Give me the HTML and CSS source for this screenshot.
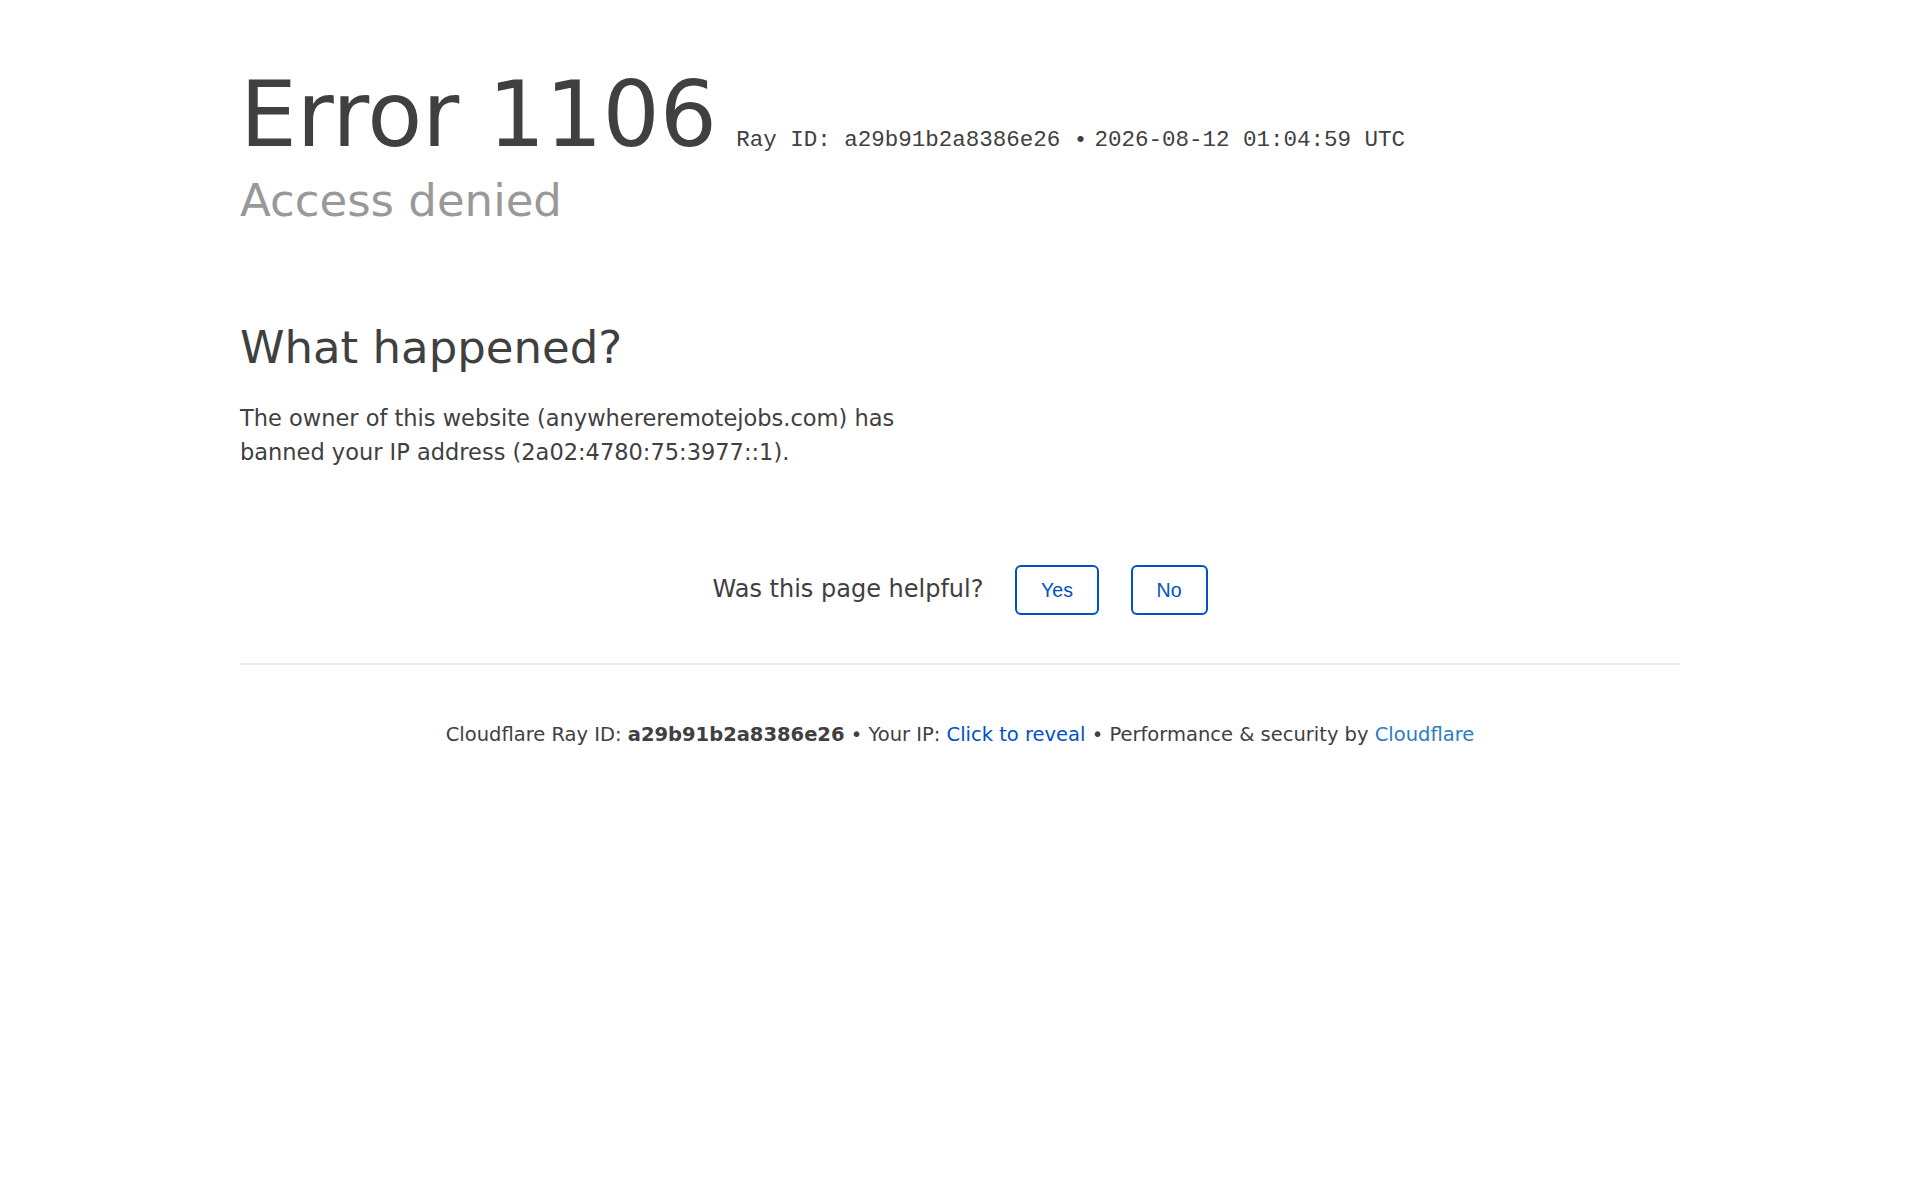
FILE: index.html
```html
<!DOCTYPE html>
<html lang="en">
<head>
<meta charset="utf-8">
<title>Access denied | anywhereremotejobs.com used Cloudflare to restrict access</title>
<link rel="stylesheet" href="styles.css">
</head>
<body>
<div class="cf-wrapper">
  <header class="header">
    <h1 class="title"><span>Error</span>
      <span>1106</span></h1>
    <span class="ray">Ray ID: a29b91b2a8386e26 &bull;</span>
    <span class="ray">2026-08-12 01:04:59 UTC</span>
    <h2 class="subtitle">Access denied</h2>
  </header>

  <section class="section">
    <div class="what">
      <h2 class="what-title">What happened?</h2>
      <p class="what-text">The owner of this website (anywhereremotejobs.com) has banned your IP address (2a02:4780:75:3977::1).</p>
    </div>
  </section>

  <div class="feedback">
    Was this page helpful?
    <button class="fb-btn" type="button">Yes</button>
    <button class="fb-btn" type="button">No</button>
  </div>

  <div class="footer">
    <p class="footer-text">
      <span class="footer-item">Cloudflare Ray ID: <strong class="ray-strong">a29b91b2a8386e26</strong></span>
      <span class="sep">&bull;</span>
      <span class="footer-item">Your IP: <span class="reveal">Click to reveal</span></span>
      <span class="sep">&bull;</span>
      <span class="footer-item">Performance &amp; security by <a class="cf-link" href="#">Cloudflare</a></span>
    </p>
  </div>
</div>
</body>
</html>
```

FILE: styles.css
```css
html, body {
  margin: 0;
  padding: 0;
  background: #fff;
}

body {
  font-family: "DejaVu Sans", sans-serif;
  font-size: 22.5px;
  line-height: 1.5;
  color: #404040;
}

.cf-wrapper {
  width: 1440px;
  margin: 0 auto;
}

.header {
  padding-top: 59px;
  margin-bottom: 90px;
}

.title {
  display: inline-block;
  margin: 0 12px 0 0;
  font-size: 90px;
  font-weight: 400;
  line-height: 1.25;
  color: #404040;
}

.ray {
  display: inline-block;
  font-family: "Liberation Mono", monospace;
  font-size: 22.5px;
  color: #404040;
}

.subtitle {
  margin: 0;
  font-size: 45px;
  font-weight: 400;
  line-height: 1.3;
  color: #999;
}

.section {
  margin-bottom: 48px;
}

.what {
  width: 720px;
}

.what-title {
  margin: 0 0 25.5px;
  font-size: 45px;
  font-weight: 400;
  line-height: 1.25;
  color: #404040;
}

.what-text {
  margin: 0;
  font-size: 22.5px;
  line-height: 1.5;
}

.feedback {
  padding: 48px 0;
  text-align: center;
  font-size: 24px;
  line-height: 1.5;
}

.fb-btn {
  margin-left: 24px;
  padding: 11.5px 24px;
  background: #fff;
  border: 2px solid #0051c3;
  border-radius: 6px;
  font-family: "Liberation Sans", Arial, sans-serif;
  font-size: 19.5px;
  line-height: 22.5px;
  color: #0051c3;
  cursor: pointer;
}

.footer {
  border-top: 2px solid #ebebeb;
  padding: 58px 0 60px;
  text-align: center;
}

.footer-text {
  margin: 0;
  font-size: 19.5px;
  line-height: normal;
  color: #404040;
}

.ray-strong {
  font-weight: 700;
}

.reveal {
  color: #0051c3;
}

.cf-link {
  color: #2f7bbf;
  text-decoration: none;
}
```
